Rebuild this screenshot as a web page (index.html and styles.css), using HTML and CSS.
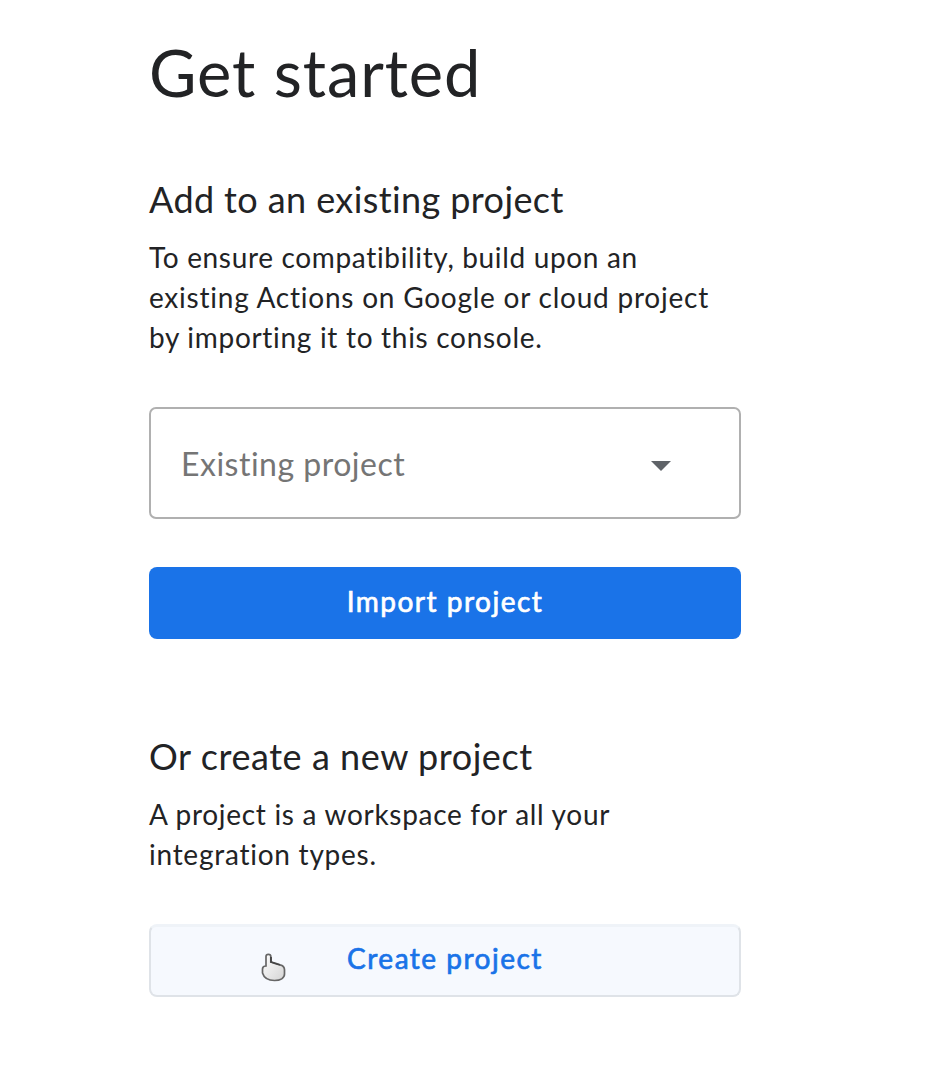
FILE: index.html
```html
<!DOCTYPE html>
<html lang="en">
<head>
<meta charset="utf-8">
<title>Get started</title>
<link rel="stylesheet" href="styles.css">
</head>
<body>
<main class="panel">
  <h1 class="title">Get started</h1>
  <section class="existing">
    <h2 class="heading heading-add">Add to an existing project</h2>
    <p class="copy"><span class="line line-1">To ensure compatibility, build upon an</span> <span class="line line-2">existing Actions on Google or cloud project</span> <span class="line line-3">by importing it to this console.</span></p>
    <div class="select" role="combobox" aria-expanded="false" tabindex="0">
      <span class="placeholder">Existing project</span>
      <svg class="arrow" width="20" height="10" viewBox="0 0 20 10"><path d="M0 0h20L10 10z" fill="#5f6368"/></svg>
    </div>
    <button class="button primary">Import project</button>
  </section>
  <section class="create">
    <h2 class="heading heading-new">Or create a new project</h2>
    <p class="copy"><span class="line line-4">A project is a workspace for all your</span> <span class="line line-5">integration types.</span></p>
    <button class="button secondary">Create project
      <svg class="pointer" width="25" height="29" viewBox="0 0 25 29"><defs><linearGradient id="hand" x1="0" y1="0" x2="1" y2="1"><stop offset="0" stop-color="#fff"/><stop offset="1" stop-color="#d4d4d4"/></linearGradient></defs><path d="M5 3.5C5 .6 9.800.6 9.800 3.500V9L14 10l5 1.800c3 .7 4.500 2 4.500 5V21c0 4-4 6.500-10 6.500S3 25 1.500 20v-4c0-2 1.500-3 3.500-3z" fill="url(#hand)" stroke="#666" stroke-width="1.700"/><path d="M10 4v5l4 1.500 5 1.500" fill="none" stroke="#444" stroke-width="1.800"/></svg>
    </button>
  </section>
</main>
</body>
</html>
```
FILE: styles.css
```css
* { box-sizing: border-box; }
body { margin: 0; background: #fff; color: #222325; font-family: Lato, "Open Sans", sans-serif; font-variant-ligatures: none; }
.panel { width: 592px; margin-left: 149px; padding-top: 32px; }
.title, .heading, .copy { margin: 0; font-weight: 400; white-space: nowrap; }
.title { font-size: 65px; line-height: 80px; letter-spacing: .9px; }
.existing { padding-top: 63px; }
.heading { font-size: 36px; line-height: 48px; }
.heading-add { letter-spacing: .4px; }
.heading-new { letter-spacing: .56px; }
.copy { padding-top: 14px; font-size: 28px; line-height: 40px; }
.line { display: block; }
.line-1 { letter-spacing: .66px; }
.line-2 { letter-spacing: .77px; }
.line-3 { letter-spacing: .7px; }
.line-4 { letter-spacing: .7px; }
.line-5 { letter-spacing: .75px; }
.select { display: flex; align-items: center; justify-content: space-between; height: 112px; margin-top: 50px; padding: 0 68px 0 30px; border: 2px solid #b0b0b0; border-radius: 7px; }
.placeholder { font-size: 32px; letter-spacing: .5px; color: #757575; }
.arrow { display: block; margin-top: 6px; }
.button { display: flex; align-items: center; justify-content: center; position: relative; width: 100%; height: 72px; padding: 0 0 4px; border: 0; border-radius: 8px; font: 400 28px Lato, sans-serif; letter-spacing: 1.5px; -webkit-text-stroke: .7px currentColor; }
.primary { margin-top: 48px; background: #1a73e8; color: #fff; }
.create { padding-top: 93px; }
.secondary { height: 73px; margin-top: 50px; padding-bottom: 6px; border: 2px solid #dfe3e8; border-top: 3px solid #eff3f8; background: #f6f9fe; color: #1a73e8; }
.pointer { position: absolute; left: 110px; top: 26px; }
```
